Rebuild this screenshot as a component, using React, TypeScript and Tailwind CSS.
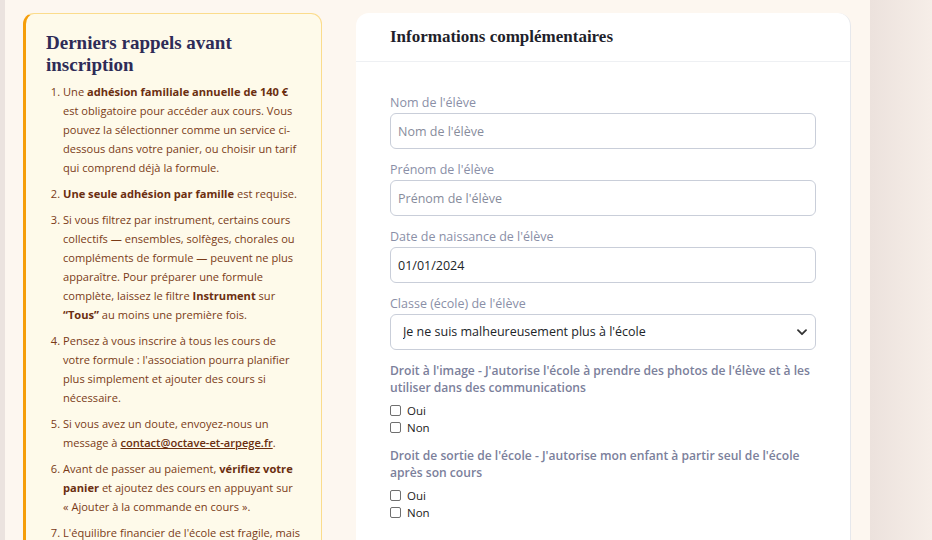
import React from "react";

const sans = "font-['Open_Sans','Noto_Sans',sans-serif]";
const serif = "font-['Liberation_Serif','DejaVu_Serif',serif]";
const strong = "font-bold text-[#6b2e10]";

const Reminders = () => (
  <div className="w-[299px] shrink-0 self-start rounded-[11px] border border-[#fbdc8c] border-l-[3px] border-l-[#f59e0b] bg-[#fefaea] pl-[20px] pr-[18px] pt-[18px] pb-6">
    <h2 className={`${serif} text-[19px] leading-[22px] font-bold text-[#2e2b57]`}>
      Derniers rappels avant inscription
    </h2>
    <ol
      className={`${sans} mt-[6px] list-decimal pl-[17px] text-[11.1px] leading-[19px] text-[#7a3a17] marker:text-[#7a3a17]`}
    >
      <li className="mb-[7px]">
        Une <b className={strong}>adhésion familiale annuelle de 140&nbsp;€</b> est
        obligatoire pour accéder aux cours. Vous pouvez la sélectionner comme un service
        ci-dessous dans votre panier, ou choisir un tarif qui comprend déjà la formule.
      </li>
      <li className="mb-[7px]">
        <b className={strong}>Une seule adhésion par famille</b> est requise.
      </li>
      <li className="mb-[7px]">
        Si vous filtrez par instrument, certains cours collectifs — ensembles, solfèges,
        chorales ou compléments de formule — peuvent ne plus apparaître. Pour préparer une
        formule complète, laissez le filtre <b className={strong}>Instrument</b> sur{" "}
        <b className={strong}>“Tous”</b> au moins une première fois.
      </li>
      <li className="mb-[7px]">
        Pensez à vous inscrire à tous les cours de votre formule : l'association pourra
        planifier plus simplement et ajouter des cours si nécessaire.
      </li>
      <li className="mb-[7px]">
        Si vous avez un doute, envoyez-nous un message à{" "}
        <a href="#" className="font-semibold text-[#6b2e10] underline">
          contact@octave-et-arpege.fr
        </a>
        .
      </li>
      <li className="mb-[7px]">
        Avant de passer au paiement, <b className={strong}>vérifiez votre panier</b> et
        ajoutez des cours en appuyant sur «&nbsp;Ajouter à la commande en cours&nbsp;».
      </li>
      <li className="mb-[7px]">
        L'équilibre financier de l'école est fragile, mais nous faisons tout pour garder des
        tarifs accessibles.
      </li>
    </ol>
  </div>
);

type FieldProps = { label: string; children: React.ReactNode };

const Field = ({ label, children }: FieldProps) => (
  <div className="mb-[12px]">
    <label className="block text-[12.5px] leading-[18px] text-[#8a8fa7]">{label}</label>
    <div className="mt-[1px]">{children}</div>
  </div>
);

const inputCls =
  "w-full h-[36px] rounded-[6px] border border-[#c9ced9] bg-white px-[7px] text-[12.5px] text-[#212529] placeholder:text-[#878c9c] outline-none";

const YesNo = ({ name, question }: { name: string; question: string }) => (
  <div className="mb-[11px]">
    <p className="text-[12.1px] leading-[17px] font-semibold text-[#7b809b]">{question}</p>
    <div className="mt-[6px] flex flex-col">
      {["Oui", "Non"].map((opt) => (
        <label key={opt} className="flex h-[17px] items-center gap-[6px] text-[11.5px] text-[#222]">
          <input
            type="checkbox"
            name={name}
            className="h-[11px] w-[11px] appearance-none rounded-[2px] border border-[#6f6f6f] bg-white"
          />
          {opt}
        </label>
      ))}
    </div>
  </div>
);

const ExtraInfo = () => (
  <div className="w-[495px] shrink-0 self-start rounded-t-[13px] border-r border-[#e6e8ec] bg-white">
    <div className="flex h-[49px] items-center border-b border-[#eef0f3] px-[34px]">
      <h3 className={`${serif} text-[17px] font-bold text-[#1f1f2b]`}>
        Informations complémentaires
      </h3>
    </div>
    <div className={`${sans} px-[34px] pt-[32px] pb-10`}>
      <Field label="Nom de l'élève">
        <input className={inputCls} placeholder="Nom de l'élève" />
      </Field>
      <Field label="Prénom de l'élève">
        <input className={inputCls} placeholder="Prénom de l'élève" />
      </Field>
      <Field label="Date de naissance de l'élève">
        <input className={inputCls} defaultValue="01/01/2024" />
      </Field>
      <Field label="Classe (école) de l'élève">
        <div className="relative">
          <select className={`${inputCls} appearance-none !px-[12px] text-[#2a2a2a]`} defaultValue="none">
            <option value="none">Je ne suis malheureusement plus à l'école</option>
          </select>
          <svg
            className="pointer-events-none absolute right-[9px] top-[15px]"
            width="10"
            height="7"
            viewBox="0 0 10 7"
            fill="none"
          >
            <path d="M1 1.2l4 4 4-4" stroke="#333" strokeWidth="1.8" strokeLinecap="round" strokeLinejoin="round" />
          </svg>
        </div>
      </Field>
      <YesNo
        name="image"
        question="Droit à l'image - J'autorise l'école à prendre des photos de l'élève et à les utiliser dans des communications"
      />
      <YesNo
        name="sortie"
        question="Droit de sortie de l'école - J'autorise mon enfant à partir seul de l'école après son cours"
      />
    </div>
  </div>
);

export default function App() {
  return (
    <div className="flex h-[540px] w-[932px] overflow-hidden bg-[#fdf7f0]">
      <div className="w-[5px] shrink-0 bg-[#ebe3df]" />
      <main className="flex flex-1 gap-[34px] pl-[18px] pt-[13px]">
        <Reminders />
        <ExtraInfo />
      </main>
      <div className="w-[62px] shrink-0 bg-gradient-to-r from-[#ece2dd] to-[#f6eee8]" />
    </div>
  );
}
